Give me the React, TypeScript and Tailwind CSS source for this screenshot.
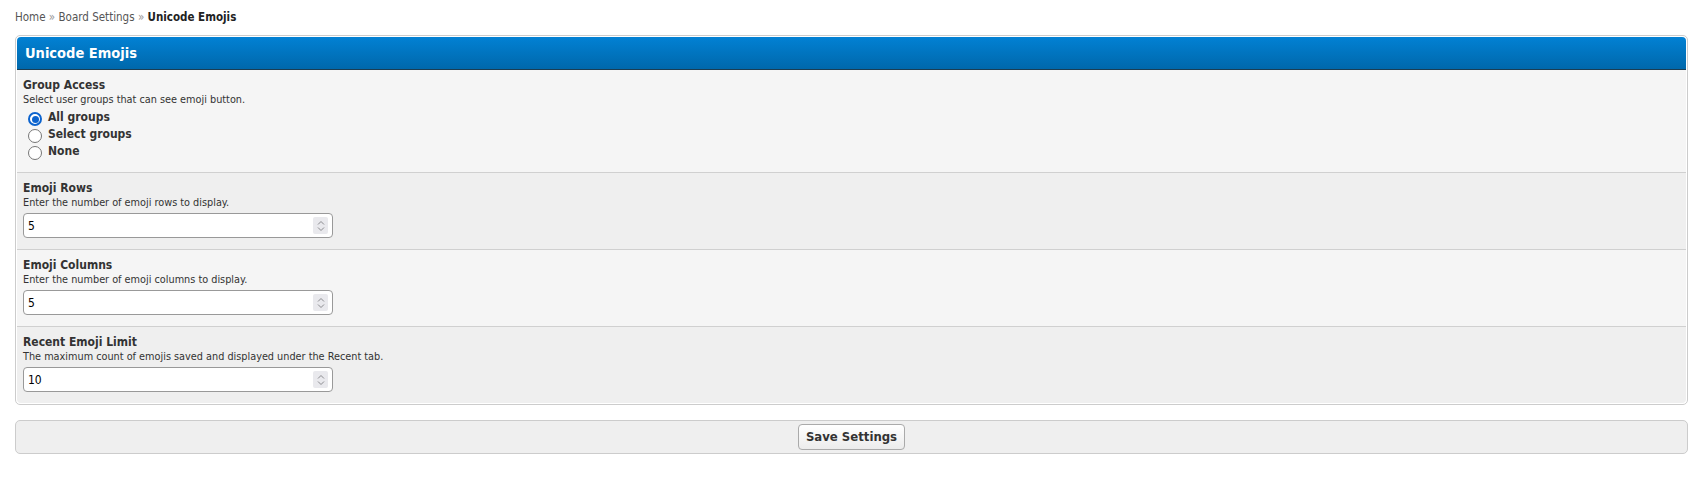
import React, { useState } from "react";

type NumField = { id: string; title: string; desc: string; value: string };

const numFields: NumField[] = [
  { id: "rows", title: "Emoji Rows", desc: "Enter the number of emoji rows to display.", value: "5" },
  { id: "cols", title: "Emoji Columns", desc: "Enter the number of emoji columns to display.", value: "5" },
  {
    id: "recent",
    title: "Recent Emoji Limit",
    desc: "The maximum count of emojis saved and displayed under the Recent tab.",
    value: "10",
  },
];

const groupOptions = ["All groups", "Select groups", "None"];

function Spinner() {
  return (
    <div className="flex h-[17px] w-[15px] flex-col items-center justify-center gap-[2px] rounded-[2px] bg-[#e9e9ed]">
      <svg width="8" height="5" viewBox="0 0 8 5">
        <path d="M1 4.5 L4 1.5 L7 4.5" fill="none" stroke="#8a8a8e" strokeWidth="1" />
      </svg>
      <svg width="8" height="5" viewBox="0 0 8 5">
        <path d="M1 0.5 L4 3.5 L7 0.5" fill="none" stroke="#8a8a8e" strokeWidth="1" />
      </svg>
    </div>
  );
}

function NumberInput({ value }: { value: string }) {
  return (
    <div className="flex h-[25px] w-[310px] items-center rounded-[4px] border border-[#999] bg-white pl-[4px] pr-[4px]">
      <span className="flex-1 text-[12px] text-black">{value}</span>
      <Spinner />
    </div>
  );
}

function Radio({ checked }: { checked: boolean }) {
  if (checked) {
    return (
      <span className="mt-[3px] flex h-[14px] w-[14px] items-center justify-center rounded-full border-2 border-[#0b63ce] bg-white">
        <span className="h-[7px] w-[7px] rounded-full bg-[#0b63ce]" />
      </span>
    );
  }
  return <span className="mt-[3px] h-[14px] w-[14px] rounded-full border border-[#767676] bg-white" />;
}

export default function App() {
  const [group, setGroup] = useState(0);

  return (
    <div className="min-h-screen bg-white px-[15px] pt-[10px] font-['DejaVu_Sans_Condensed','DejaVu_Sans',sans-serif] text-[12px] text-[#333]">
      {/* breadcrumb */}
      <div className="h-[15px] text-[11.5px] leading-[15px] text-[#555]">
        Home <span className="text-[#999]">»</span> Board Settings <span className="text-[#999]">»</span>{" "}
        <span className="font-bold text-[#222]">Unicode Emojis</span>
      </div>

      {/* settings panel */}
      <div className="mt-[10px] rounded-[5px] border border-[#ccc] bg-white p-[1px]">
        <div className="h-[33px] rounded-t-[4px] border-b border-[#1b3d52] bg-gradient-to-b from-[#0281d4] to-[#0068ab] pl-[8px] text-[14.5px] font-bold leading-[32px] text-white">
          Unicode Emojis
        </div>

        <div className="border-b border-[#d0d0d0] bg-[#f5f5f5] px-[6px] pb-[12px] pt-[8px]">
          <div className="font-bold leading-[15px]">Group Access</div>
          <div className="text-[10.8px] leading-[13px]">Select user groups that can see emoji button.</div>
          <div className="mt-[3px] flex flex-col">
            {groupOptions.map((opt, i) => (
              <label
                key={opt}
                onClick={() => setGroup(i)}
                className="flex h-[17px] cursor-pointer items-start gap-[6px] pl-[5px] font-bold leading-[17px]"
              >
                <Radio checked={group === i} />
                {opt}
              </label>
            ))}
          </div>
        </div>

        {numFields.map((f, i) => (
          <div
            key={f.id}
            className={`px-[6px] pb-[11px] pt-[8px] ${i % 2 === 0 ? "bg-[#efefef]" : "bg-[#f5f5f5]"} ${
              i < numFields.length - 1 ? "border-b border-[#d0d0d0]" : "rounded-b-[4px]"
            }`}
          >
            <div className="font-bold leading-[15px]">{f.title}</div>
            <div className="text-[10.8px] leading-[13px]">{f.desc}</div>
            <div className="mt-[4px]">
              <NumberInput value={f.value} />
            </div>
          </div>
        ))}
      </div>

      {/* save bar */}
      <div className="mt-[15px] flex h-[34px] items-center justify-center rounded-[5px] border border-[#ccc] bg-[#efefef]">
        <button className="h-[26px] rounded-[4px] border border-[#aaa] bg-gradient-to-b from-white to-[#ececec] px-[7px] text-[13px] font-bold text-[#333]">
          Save Settings
        </button>
      </div>
    </div>
  );
}
